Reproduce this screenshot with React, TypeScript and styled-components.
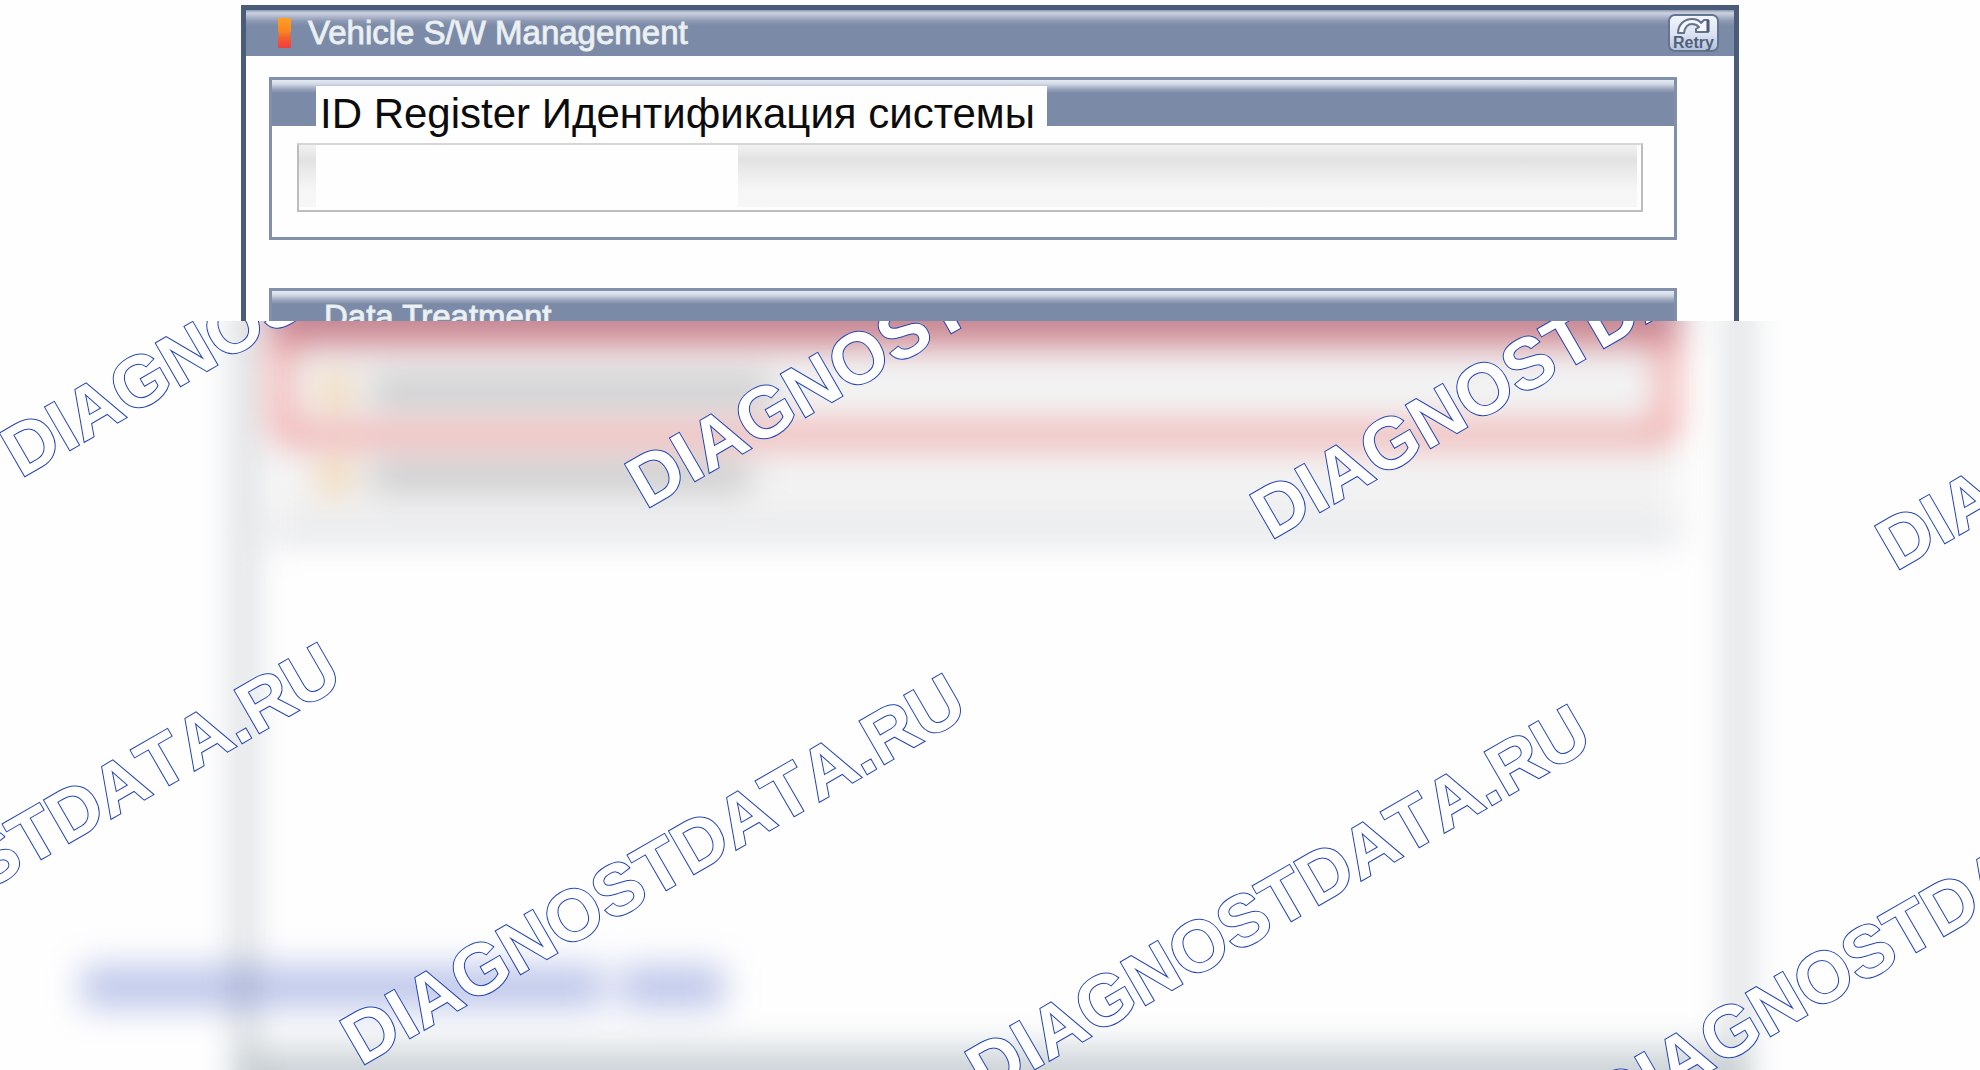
import React from "react";
import styled, { createGlobalStyle, css } from "styled-components";

const GlobalStyle = createGlobalStyle`
  *, *::before, *::after { box-sizing: border-box; }
  body {
    margin: 0;
    background: #fefefe;
    font-family: "Liberation Sans", Arial, sans-serif;
  }
`;

const SLATE = "#7b8aa7";
const FRAME = "#4a5c78";

const Page = styled.main`
  display: flex;
  flex-direction: column;
  min-height: 100vh;
  overflow: hidden;
`;

const Upper = styled.section`
  padding: 5px 241px 0;
`;

const Window = styled.div`
  border: 5px solid ${FRAME};
  border-bottom: 0;
  background: #fefefe;
`;

const TitleBar = styled.header`
  display: flex;
  align-items: center;
  gap: 16px;
  height: 46px;
  padding: 0 15px 0 31px;
  background: linear-gradient(#8b98b2 0, #cdd2e1 3px, #b4bccf 6px, #8d99b3 11px, ${SLATE} 16px);
`;

const titleText = css`
  margin: 0;
  color: #eff3f5;
  font-size: 33px;
  line-height: 36px;
  font-weight: 400;
  -webkit-text-stroke: 1px #e4eaee;
  white-space: nowrap;
`;

const Heading = styled.h1`
  ${titleText}
  flex: 1;
`;

const RetryButton = styled.button`
  display: flex;
  flex-direction: column;
  align-items: center;
  width: 51px;
  height: 38px;
  padding: 1px 0 0;
  border: 2px solid #64748f;
  border-radius: 7px;
  background: linear-gradient(#f2f5fb, #dbe3f1 55%, #b4c2da);
  color: #4f5f7b;
  font-family: inherit;
  font-size: 16px;
  line-height: 15px;
  font-weight: 700;
`;

const Body = styled.div`
  display: flex;
  flex-direction: column;
  gap: 48px;
  padding: 21px 57px 0 23px;
`;

const Panel = styled.section<{ $open?: boolean }>`
  border: 3px solid #8390aa;
  border-bottom-width: ${(p) => (p.$open ? 0 : 3)}px;
`;

const PanelHead = styled.div<{ $clip?: boolean }>`
  display: flex;
  height: ${(p) => (p.$clip ? 30 : 46)}px;
  padding: ${(p) => (p.$clip ? "8px 52px 0" : "6px 44px 0")};
  overflow: ${(p) => (p.$clip ? "hidden" : "visible")};
  background: linear-gradient(#e4e9f3 0, #d3d9e6 4px, #a5afc4 8px, ${SLATE} 13px);
`;

const PanelTitle = styled.h2`
  ${titleText}
`;

const Label = styled.h2`
  height: 48px;
  margin: 0;
  padding: 0 12px 0 4px;
  background: #fefefe;
  color: #0c0c0c;
  font-size: 42px;
  line-height: 56px;
  font-weight: 400;
  white-space: nowrap;
`;

const PanelBody = styled.div`
  padding: 17px 31px 25px 25px;
`;

const Field = styled.div`
  height: 69px;
  padding: 0 0 3px 17px;
  border: 2px solid #bdbdbd;
  border-top-color: #d6d6d6;
  background: linear-gradient(#f1f1f1 0, #e2e2e2 15px, #e9e9e9 24px, #f6f6f6 44px, #f7f7f7 100%);
  box-shadow: inset -4px -3px 0 #fefefe;
`;

const FieldValue = styled.div`
  width: 422px;
  height: 100%;
  background: #fefefe;
`;

const Lower = styled.section`
  position: relative;
  flex: 1;
  overflow: hidden;
`;

/* Out-of-focus copy of the window body that lies behind the stamps */
const Haze = styled.div`
  position: absolute;
  inset: -60px 0 -80px;
  filter: blur(17px);
`;

const HazeWindow = styled.div`
  display: flex;
  flex-direction: column;
  justify-content: space-between;
  height: 100%;
  margin: 0 238px 0 241px;
  border: 6px solid #6a7884;
  border-width: 0 6px;
`;

const HazePanel = styled.div`
  height: 276px;
  margin: 0 56px 0 22px;
  border-bottom: 4px solid #8e9ab0;
  background: #f2f2f2;
`;

const HazeHead = styled.div`
  height: 84px;
  background: #b48c9e;
`;

const HazeRow = styled.div<{ $framed?: boolean }>`
  display: flex;
  align-items: center;
  gap: 24px;
  height: ${(p) => (p.$framed ? 116 : 72)}px;
  margin: ${(p) => (p.$framed ? "-20px 6px 0" : "0 6px")};
  padding: ${(p) => (p.$framed ? "16px 36px 0" : "0 48px")};
  border: ${(p) => (p.$framed ? "12px solid #f07070" : "0 solid transparent")};
  border-radius: 12px;
`;

const HazeIcon = styled.span`
  width: 24px;
  height: 28px;
  background: #f2c488;
`;

const HazeText = styled.span<{ $width: number }>`
  width: ${(p) => p.$width}px;
  height: 24px;
  background: #bebfc1;
`;

const HazeFooter = styled.div`
  height: 102px;
  background: #cbd2d6;
`;

const HazeStamp = styled.div`
  position: absolute;
  left: 82px;
  bottom: 142px;
  display: flex;
  gap: 16px;
`;

const HazeBar = styled.span<{ $width: number }>`
  width: ${(p) => p.$width}px;
  height: 42px;
  background: rgba(54, 82, 190, 0.33);
`;

const Stamps = styled.div`
  position: absolute;
  inset: 0;
  overflow: hidden;
  pointer-events: none;
`;

const Stamp = styled.span`
  position: absolute;
  color: #ffffff;
  font-size: 72px;
  line-height: 72px;
  font-weight: 700;
  font-kerning: none;
  white-space: nowrap;
  -webkit-text-stroke: 2px #2142b0;
  paint-order: stroke fill;
  transform: rotate(-30deg);
  transform-origin: 5px 61px;
`;

const STAMP_STEP = { x: 625, y: 31 };
const STAMP_ROWS = [
  { x: 20, y: 94, count: 4 },
  { x: -265, y: 651, count: 4 },
];
const stamps = STAMP_ROWS.flatMap((row) =>
  Array.from({ length: row.count }, (_, i) => ({
    left: row.x + i * STAMP_STEP.x,
    top: row.y + i * STAMP_STEP.y,
  }))
);

function Marker() {
  return (
    <svg width="15" height="32" viewBox="0 0 15 32" aria-hidden="true">
      <defs>
        <linearGradient id="marker" x1="0" y1="0" x2="0" y2="1">
          <stop offset="0" stopColor="#ffa020" />
          <stop offset="0.45" stopColor="#fb8420" />
          <stop offset="0.65" stopColor="#f4602c" />
          <stop offset="1" stopColor="#f23c40" />
        </linearGradient>
      </defs>
      <path d="M1 1h12l1 1v12l-1 3 1 3v10l-1 1H2l-1-1V20l1-3-1-3z" fill="url(#marker)" />
    </svg>
  );
}

function RetryIcon() {
  return (
    <svg width="36" height="18" viewBox="0 0 36 18" aria-hidden="true">
      <path
        d="M2 16C2 8 8 2 16 2c4 0 7 1 9 4l3-3h4v12H20v-3l3-2c-2-2-4-3-7-3-4 0-7 3-8 9z"
        fill="#f4f7fc"
        stroke="#64728c"
        strokeWidth="2"
        strokeLinejoin="round"
      />
      <path d="M32 3v12" stroke="#4d5b76" strokeWidth="3" />
    </svg>
  );
}

export default function App() {
  return (
    <Page>
      <GlobalStyle />
      <Upper>
        <Window>
          <TitleBar>
            <Marker />
            <Heading>Vehicle S/W Management</Heading>
            <RetryButton type="button">
              <RetryIcon />
              Retry
            </RetryButton>
          </TitleBar>
          <Body>
            <Panel>
              <PanelHead>
                <Label>ID Register Идентификация системы</Label>
              </PanelHead>
              <PanelBody>
                <Field>
                  <FieldValue />
                </Field>
              </PanelBody>
            </Panel>
            <Panel $open>
              <PanelHead $clip>
                <PanelTitle>Data Treatment</PanelTitle>
              </PanelHead>
            </Panel>
          </Body>
        </Window>
      </Upper>
      <Lower>
        <Haze aria-hidden="true">
          <HazeWindow>
            <HazePanel>
              <HazeHead />
              <HazeRow $framed>
                <HazeIcon />
                <HazeText $width={400} />
              </HazeRow>
              <HazeRow>
                <HazeIcon />
                <HazeText $width={380} />
              </HazeRow>
            </HazePanel>
            <HazeFooter />
          </HazeWindow>
          <HazeStamp>
            <HazeBar $width={522} />
            <HazeBar $width={104} />
          </HazeStamp>
        </Haze>
        <Stamps>
          {stamps.map((pos) => (
            <Stamp key={`${pos.left}:${pos.top}`} style={pos}>
              DIAGNOSTDATA.RU
            </Stamp>
          ))}
        </Stamps>
      </Lower>
    </Page>
  );
}
